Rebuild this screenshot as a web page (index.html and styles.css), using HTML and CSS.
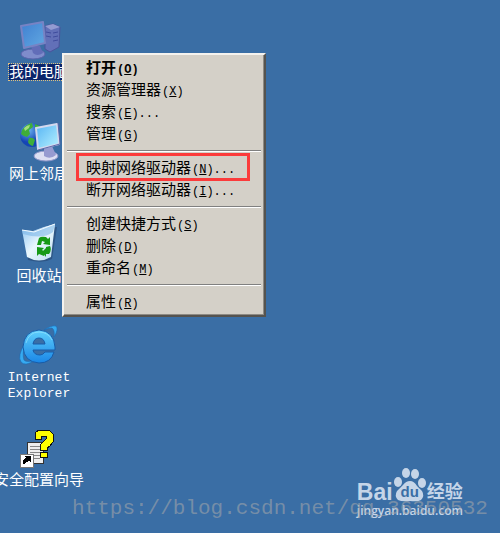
FILE: index.html
```html
<!DOCTYPE html>
<html lang="zh-CN">
<head>
  <meta charset="utf-8">
  <meta name="viewport" content="width=device-width, initial-scale=1.0">
  <title>桌面</title>
  <link rel="stylesheet" href="styles.css">
</head>
<body>
  <main class="desktop">
    <nav class="icons">
      <a class="icon selected" href="#computer">
        <svg viewBox="0 0 48 40">
          <defs>
            <linearGradient id="dimScreen" x1="0" y1="0" x2="1" y2="1">
              <stop offset="0" stop-color="#3f7fd0"/>
              <stop offset="1" stop-color="#62a9e2"/>
            </linearGradient>
          </defs>
          <path d="M30 6 38 4 45 7 44 27 35 32 30 29Z" fill="#6270b8" stroke="#4a539c"/>
          <path d="M30 6 38 4 45 7 36 10Z" fill="#939bd1"/>
          <path d="M31 12l5 1M31 16l5 1M38 13l5-1M38 17l5-1M38 21l5-1" stroke="#3f4c9d"/>
          <ellipse cx="18" cy="34" rx="12" ry="5" fill="#7f8ccb" stroke="#5963ab"/>
          <path d="M16 26h9l3 7q-6 4-10 0Z" fill="#626db8"/>
          <path d="M6 6 28 2 30 23 9 28Z" fill="url(#dimScreen)" stroke="#7783c4" stroke-width="2" stroke-linejoin="round"/>
        </svg>
        <span class="label">我的电脑</span>
      </a>
      <a class="icon" href="#network">
        <svg viewBox="0 0 48 40">
          <defs>
            <radialGradient id="globe" cx=".35" cy=".3">
              <stop offset="0" stop-color="#6cb4f2"/>
              <stop offset="1" stop-color="#1545b4"/>
            </radialGradient>
            <linearGradient id="screen" x1="0" y1="0" x2="1" y2="1">
              <stop offset="0" stop-color="#56b4f4"/>
              <stop offset="1" stop-color="#b8f2ff"/>
            </linearGradient>
          </defs>
          <circle cx="17" cy="13" r="12" fill="url(#globe)"/>
          <path d="M7 8q4-6 10-7l1 4-4 3 1 4-3 3q-4-1-6-3ZM20 2q5 1 7 5l-2 4-5-2ZM14 16q4-1 6 2l-2 6q-4-1-5-4Z" fill="#3fae3a"/>
          <path d="M9 6q3-3 6-3l-1 3-4 3Z" fill="#a5dd7c"/>
          <ellipse cx="31" cy="34" rx="12" ry="5" fill="#dcdff2" stroke="#8d94c8"/>
          <path d="M29 24h8l4 9q-6 5-12 1Z" fill="#969bd0"/>
          <path d="M21 6 42 2 44 22 23 27Z" fill="url(#screen)" stroke="#d3d8ee" stroke-width="2" stroke-linejoin="round"/>
          <path d="M43 1 45 22 23 28" fill="none" stroke="#5d66a8"/>
        </svg>
        <span class="label">网上邻居</span>
      </a>
      <a class="icon" href="#recycle">
        <svg viewBox="0 0 48 40">
          <defs>
            <linearGradient id="bin" x1="0" y1="0" x2="1" y2="1">
              <stop offset="0" stop-color="#8cc4f2"/>
              <stop offset=".5" stop-color="#eaf7fd"/>
              <stop offset="1" stop-color="#b8dcf0"/>
            </linearGradient>
          </defs>
          <path d="M9 8 42 3 37 35Q28 40 13 36Z" fill="#2e5686"/>
          <path d="M7 6 18 7 29 3 40 0 36 33Q24 40 12 33Z" fill="url(#bin)"/>
          <path d="M7 6 18 7 40 0 38 8Q28 16 8 10Z" fill="#7fb7e8" opacity=".6"/>
          <path d="M7 6 19 8 40 0" fill="none" stroke="#f4fbff"/>
          <g fill="#169a16">
            <path d="M22 21 24 14Q26 12 31 13L33 15 35 13 35 21 28 20 30 18 27 17 26 21Z"/>
            <path d="M22 23 29 24 27 26 30 28 29 32 24 30 22 32Z"/>
            <path d="M31 23 35 22Q37 26 34 30L31 30 31 33 27 28 31 24Z"/>
          </g>
        </svg>
        <span class="label">回收站</span>
      </a>
      <a class="icon" href="#ie">
        <svg viewBox="0 0 48 40">
          <defs>
            <linearGradient id="ie" x1="0" y1="0" x2="0" y2="1">
              <stop offset="0" stop-color="#5fd0fc"/>
              <stop offset="1" stop-color="#1a86e6"/>
            </linearGradient>
          </defs>
          <path d="M29 4Q37-1 41 0 44 3 39 11 40 4 37 2 33 2 29 4ZM10 17Q2 30 6 36 10 41 20 34 12 37 9 34 7 29 10 17Z" fill="#36aaf1" stroke="#1d69b4" stroke-width=".6"/>
          <path d="M24 4Q39 5 40 21L40 24H18Q19 29 25 29 28 29 30 26H39Q36 37 24 37 9 36 8 21 9 5 24 4ZM18 18H30Q29 12 24 12 19 12 18 18Z" fill="url(#ie)" fill-rule="evenodd" stroke="#185ca8"/>
          <path d="M11 17Q14 6 24 6 33 6 37 14" fill="none" stroke="#9ce6ff" opacity=".6"/>
        </svg>
        <span class="label latin">Internet<br>Explorer</span>
      </a>
      <a class="icon" href="#security">
        <svg viewBox="0 0 48 40" shape-rendering="crispEdges">
          <path d="M12 14h16v21H12Z" fill="#eee" stroke="#333"/>
          <path d="M15 18h10M15 21h10M15 24h10M15 27h10M15 30h10" stroke="#888"/>
          <path d="M20 10V5l4-3h10l4 4v8l-3 4-3 2v2h-7v-5l3-3 3-3V8h-5v3h-6ZM25 24h7v5h-7Z" fill="#ff0" stroke="#111"/>
          <path d="M5 26h13v13H5Z" fill="#fff" stroke="#777"/>
          <path d="M8 36v-4l2-2h1l-2-2h7v7l-2-2-3 1-1 2Z" fill="#000"/>
        </svg>
        <span class="label">安全配置向导</span>
      </a>
    </nav>

    <div class="menu" role="menu">
      <button class="item default" role="menuitem">打开<span class="key">(<u>O</u>)</span></button>
      <button class="item" role="menuitem">资源管理器<span class="key">(<u>X</u>)</span></button>
      <button class="item" role="menuitem">搜索<span class="key">(<u>E</u>)...</span></button>
      <button class="item" role="menuitem">管理<span class="key">(<u>G</u>)</span></button>
      <hr>
      <button class="item marked" role="menuitem">映射网络驱动器<span class="key">(<u>N</u>)...</span></button>
      <button class="item" role="menuitem">断开网络驱动器<span class="key">(<u>I</u>)...</span></button>
      <hr>
      <button class="item" role="menuitem">创建快捷方式<span class="key">(<u>S</u>)</span></button>
      <button class="item" role="menuitem">删除<span class="key">(<u>D</u>)</span></button>
      <button class="item" role="menuitem">重命名<span class="key">(<u>M</u>)</span></button>
      <hr>
      <button class="item" role="menuitem">属性<span class="key">(<u>R</u>)</span></button>
    </div>

    <div class="baidu">
      <div class="brand">
        <span class="bai">Bai</span>
        <span class="paw">
          <svg viewBox="0 0 32 36">
            <ellipse cx="4" cy="15" rx="4" ry="5"/>
            <ellipse cx="12" cy="6" rx="4" ry="5"/>
            <ellipse cx="21" cy="7" rx="4" ry="5"/>
            <ellipse cx="28" cy="16" rx="4" ry="5"/>
            <path d="M16 14Q20 14 23 19L28 24Q31 29 27 33 24 35 16 34 8 35 4 33 0 29 3 24L9 18Q12 14 16 14Z"/>
          </svg>
          <span class="du">du</span>
        </span>
        <span class="jingyan">经验</span>
      </div>
      <div class="url">jingyan.baidu.com</div>
    </div>

    <div class="blog-mark">https://blog.csdn.net/qq_36350532</div>
  </main>
</body>
</html>
```
FILE: styles.css
```css
:root {
  --desk: #3a6ea5;
  --face: #d4d0c8;
  --mark: #c5d5e8;
  --cjk: "Liberation Sans", "Noto Sans CJK SC", sans-serif;
  --mono: "Liberation Mono", monospace;
}

* {
  box-sizing: border-box;
}

body {
  margin: 0;
  background: var(--desk);
  font-family: var(--cjk);
  font-size: 15px;
}

.desktop {
  position: relative;
  min-height: 100vh;
  padding-top: 20px;
  overflow: hidden;
}

/* desktop icons */
.icons {
  display: flex;
  flex-direction: column;
  width: 78px;
}

.icon {
  display: flex;
  flex-direction: column;
  align-items: center;
  gap: 4px;
  height: 102px;
  color: #fff;
  text-decoration: none;
}

.icon svg {
  width: 48px;
  height: 40px;
  flex: none;
  overflow: visible;
}

.label {
  line-height: 16px;
  white-space: nowrap;
  text-align: center;
}

.selected .label {
  background: #0a246a;
  outline: 1px dotted #e0c080;
}

.latin {
  font-family: var(--mono);
  font-size: 13px;
}

/* context menu */
.menu {
  position: absolute;
  left: 62px;
  top: 53px;
  width: 204px;
  padding: 2px;
  background: var(--face);
  border: 2px solid;
  border-color: #f4f2ee #55534f #55534f #f4f2ee;
  box-shadow: inset -1px -1px #8d8a84;
}

.item {
  display: block;
  position: relative;
  width: 100%;
  height: 22px;
  padding: 0 0 0 20px;
  border: 0;
  background: none;
  color: #000;
  font-family: var(--cjk);
  font-size: 15px;
  line-height: 22px;
  text-align: left;
  white-space: nowrap;
}

.default {
  font-weight: bold;
}

.key {
  padding-left: 1px;
  font-family: var(--mono);
  font-size: 12px;
}

.menu hr {
  height: 2px;
  margin: 5px 1px;
  border: 0;
  border-top: 1px solid #808080;
  border-bottom: 1px solid #fff;
}

.marked::after {
  content: "";
  box-sizing: border-box;
  position: absolute;
  left: 10px;
  top: -4px;
  width: 174px;
  height: 28px;
  border: 3px solid #fb3b3b;
}

/* watermarks */
.blog-mark {
  position: absolute;
  left: 72px;
  bottom: 12px;
  color: rgba(170, 170, 170, 0.55);
  font-family: var(--mono);
  font-size: 21px;
  line-height: 24px;
}

.baidu {
  position: absolute;
  right: 37px;
  bottom: 14px;
  color: var(--mark);
}

.brand {
  display: flex;
  align-items: flex-end;
  gap: 1px;
  font-weight: bold;
}

.bai {
  font-size: 23px;
  line-height: 22px;
}

.paw {
  position: relative;
  width: 32px;
  height: 36px;
}

.paw svg {
  display: block;
  fill: var(--mark);
}

.du {
  position: absolute;
  left: 0;
  right: 0;
  bottom: 3px;
  color: var(--desk);
  font-size: 15px;
  line-height: 16px;
  text-align: center;
}

.jingyan {
  font-size: 18px;
  line-height: 22px;
}

.url {
  font-family: "Open Sans", sans-serif;
  font-size: 12px;
  font-weight: 600;
  line-height: 16px;
}
```
